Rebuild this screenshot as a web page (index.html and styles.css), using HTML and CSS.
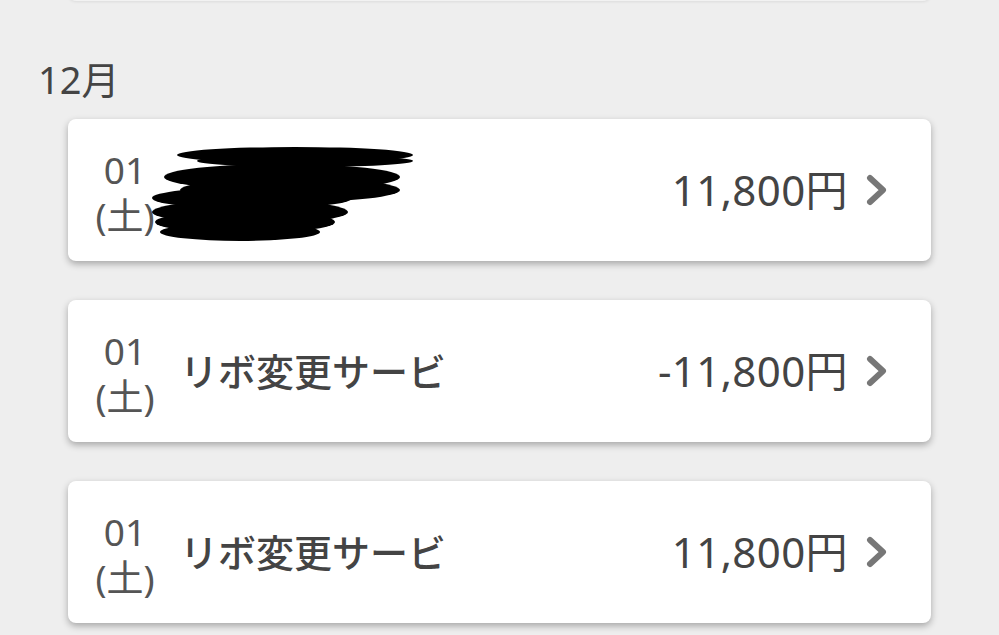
FILE: index.html
```html
<!DOCTYPE html>
<html lang="ja">
<head>
<meta charset="utf-8">
<title>明細</title>
<link rel="stylesheet" href="styles.css">
</head>
<body>
<div class="list">
  <div class="card stub"></div>
  <h2 class="month">12月</h2>

  <a class="card" href="#">
    <div class="date"><span>01</span><span>(土)</span></div>
    <div class="title"></div>
    <div class="amount">11,800円</div>
    <svg class="chev" viewBox="0 0 22 32" width="22" height="32"><path d="M4 4 L17 16 L4 28"/></svg>
    <svg class="redact" viewBox="148 145 270 100" width="270" height="100">
      <ellipse cx="295" cy="155" rx="118" ry="8"/>
      <ellipse cx="305" cy="161" rx="108" ry="6"/>
      <ellipse cx="282" cy="177" rx="118" ry="13"/>
      <ellipse cx="290" cy="190" rx="110" ry="12"/>
      <ellipse cx="252" cy="198" rx="100" ry="11"/>
      <ellipse cx="250" cy="212" rx="98" ry="12"/>
      <ellipse cx="245" cy="222" rx="90" ry="11"/>
      <ellipse cx="240" cy="232" rx="80" ry="9"/>
    </svg>
  </a>

  <a class="card" href="#">
    <div class="date"><span>01</span><span>(土)</span></div>
    <div class="title">リボ変更サービ</div>
    <div class="amount">-11,800円</div>
    <svg class="chev" viewBox="0 0 22 32" width="22" height="32"><path d="M4 4 L17 16 L4 28"/></svg>
  </a>

  <a class="card" href="#">
    <div class="date"><span>01</span><span>(土)</span></div>
    <div class="title">リボ変更サービ</div>
    <div class="amount">11,800円</div>
    <svg class="chev" viewBox="0 0 22 32" width="22" height="32"><path d="M4 4 L17 16 L4 28"/></svg>
  </a>
</div>
</body>
</html>
```
FILE: styles.css
```css
html, body {
  margin: 0;
  padding: 0;
}
body {
  background: #eeeeee;
  font-family: "Noto Sans", "Noto Sans CJK JP", sans-serif;
  color: #444;
  overflow: hidden;
}
.list {
  display: flex;
  flex-direction: column;
  padding: 0 68px;
}
.card {
  position: relative;
  display: flex;
  align-items: center;
  height: 142px;
  box-sizing: border-box;
  padding: 0 43px 0 25px;
  background: #fff;
  border-radius: 8px;
  box-shadow: 0 3px 7px rgba(0, 0, 0, 0.3);
  text-decoration: none;
  color: inherit;
  margin-bottom: 39px;
}
.card.stub {
  height: 40px;
  margin-top: -39px;
  margin-bottom: 0;
  background: #f2f2f2;
  box-shadow: 0 1px 3px rgba(0, 0, 0, 0.08);
}
.month {
  margin: 57px 0 19px -30px;
  font-size: 38px;
  line-height: 42px;
  font-weight: 400;
  color: #444;
}
.date {
  display: flex;
  flex-direction: column;
  align-items: center;
  width: 64px;
  font-size: 37px;
  line-height: 46px;
  color: #555;
  margin-top: 6px;
}
.title {
  flex: 1;
  margin-left: 23px;
  font-size: 38px;
  font-weight: 500;
  color: #444;
  line-height: 46px;
}
.amount {
  font-size: 42px;
  color: #444;
  line-height: 50px;
  letter-spacing: 0.4px;
}
.chev {
  margin-left: 18px;
  fill: none;
  stroke: #777;
  stroke-width: 6;
  stroke-linecap: round;
  stroke-linejoin: round;
}
.redact {
  position: absolute;
  left: 80px;
  top: 26px;
  fill: #000;
}
```
